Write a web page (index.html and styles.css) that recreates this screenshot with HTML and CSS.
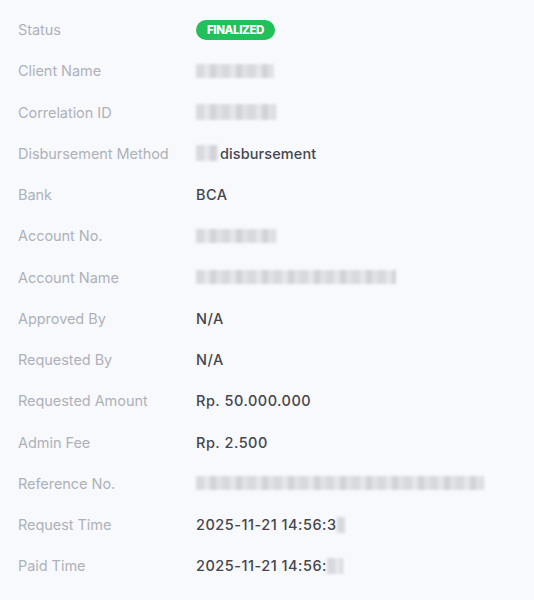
FILE: index.html
```html
<!DOCTYPE html>
<html>
<head>
<meta charset="utf-8">
<link rel="stylesheet" href="styles.css">
</head>
<body>
<div class="details">
  <div class="row"><span class="label">Status</span><span class="value"><span class="badge">FINALIZED</span></span></div>
  <div class="row"><span class="label">Client Name</span><span class="value"><span class="blur w78"></span></span></div>
  <div class="row"><span class="label">Correlation ID</span><span class="value"><span class="blur w80 tall"></span></span></div>
  <div class="row"><span class="label">Disbursement Method</span><span class="value"><span class="blur w22 tall gap"></span><span class="word">disbursement</span></span></div>
  <div class="row"><span class="label">Bank</span><span class="value">BCA</span></div>
  <div class="row"><span class="label">Account No.</span><span class="value"><span class="blur w80"></span></span></div>
  <div class="row"><span class="label">Account Name</span><span class="value"><span class="blur w200"></span></span></div>
  <div class="row"><span class="label">Approved By</span><span class="value">N/A</span></div>
  <div class="row"><span class="label">Requested By</span><span class="value">N/A</span></div>
  <div class="row"><span class="label">Requested Amount</span><span class="value">Rp. 50.000.000</span></div>
  <div class="row"><span class="label">Admin Fee</span><span class="value">Rp. 2.500</span></div>
  <div class="row"><span class="label">Reference No.</span><span class="value"><span class="blur w288"></span></span></div>
  <div class="row"><span class="label">Request Time</span><span class="value">2025-11-21 14:56:3<span class="blur w8 tall"></span></span></div>
  <div class="row"><span class="label">Paid Time</span><span class="value">2025-11-21 14:56:<span class="blur w16 tall"></span></span></div>
</div>
</body>
</html>
```
FILE: styles.css
```css
html, body {
  margin: 0;
  padding: 0;
  background: #f8f9fd;
}
body {
  font-family: Inter, "Noto Sans", sans-serif;
  font-size: 14px;
}
.details {
  padding: 9px 0 0 18px;
}
.row {
  display: grid;
  grid-template-columns: 178px 1fr;
  align-items: center;
  height: 41.25px;
}
.label {
  color: #aeb1b8;
  font-size: 14.5px;
  font-weight: 400;
  letter-spacing: -0.05px;
}
.value {
  color: #45464c;
  font-size: 14.5px;
  font-weight: 500;
  display: flex;
  align-items: center;
  letter-spacing: 0.5px;
}
.word {
  letter-spacing: 0.1px;
}
.badge {
  display: inline-block;
  background: #22c05b;
  color: #fff;
  font-size: 11.5px;
  font-weight: 800;
  letter-spacing: -0.4px;
  border-radius: 10px;
  padding: 0 11px;
  height: 20px;
  line-height: 20px;
}
.blur {
  display: inline-block;
  height: 14px;
  background:
    repeating-linear-gradient(90deg, #d2d4d9 0 8px, #e3e4e8 8px 14px, #caccd2 14px 20px, #dcdde1 20px 26px);
  filter: blur(1.5px);
  opacity: 0.85;
}
.gap { margin-right: 2px; }
.tall { height: 16px; }
.w8 { width: 8px; }
.w16 { width: 16px; }
.w22 { width: 22px; }
.w78 { width: 78px; }
.w80 { width: 80px; }
.w200 { width: 200px; }
.w288 { width: 288px; }
```
